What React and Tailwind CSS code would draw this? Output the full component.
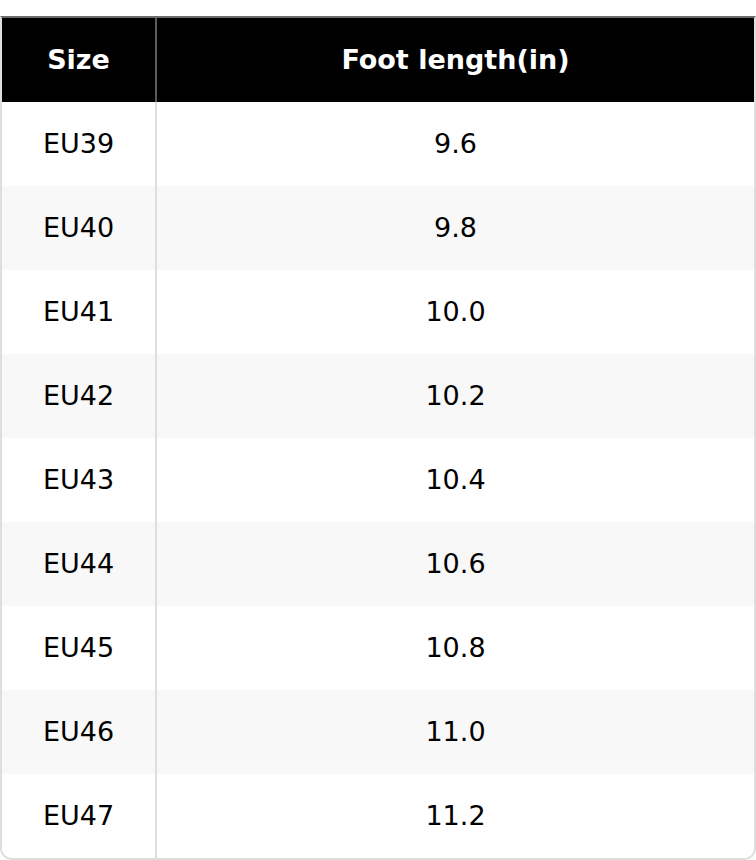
const sizes = [
  ["EU39", "9.6"],
  ["EU40", "9.8"],
  ["EU41", "10.0"],
  ["EU42", "10.2"],
  ["EU43", "10.4"],
  ["EU44", "10.6"],
  ["EU45", "10.8"],
  ["EU46", "11.0"],
  ["EU47", "11.2"],
];

export default function App() {
  return (
    <div className="bg-white pt-4 font-['DejaVu_Sans',sans-serif]">
      <div className="border-t-2 border-x-2 border-b-2 border-t-[#6b6b6b] border-x-[#dedede] border-b-[#dedede] rounded-b-xl overflow-hidden">
        <table className="w-full border-collapse text-[27px]">
          <thead>
            <tr className="bg-black text-white font-bold h-[84px]">
              <th className="w-[154px] border-r-2 border-[#5a5a5a] font-bold">Size</th>
              <th className="font-bold">Foot length(in)</th>
            </tr>
          </thead>
          <tbody>
            {sizes.map(([size, len], i) => (
              <tr key={size} className={`h-[84px] text-black ${i % 2 === 1 ? "bg-[#f8f8f8]" : "bg-white"}`}>
                <td className="text-center border-r-2 border-[#dedede]">{size}</td>
                <td className="text-center">{len}</td>
              </tr>
            ))}
          </tbody>
        </table>
      </div>
    </div>
  );
}
